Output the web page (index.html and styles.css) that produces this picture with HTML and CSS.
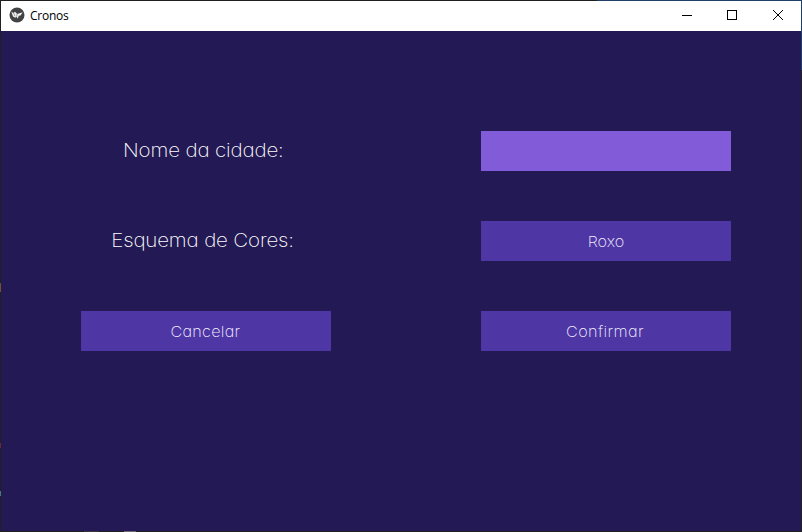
FILE: index.html
```
<!DOCTYPE html>
<html lang="pt-BR">
<head>
<meta charset="utf-8">
<title>Cronos</title>
<link rel="stylesheet" href="styles.css">
</head>
<body>
<div class="window">
  <header class="titlebar">
    <svg class="logo" width="16" height="16" viewBox="0 0 16 16"><circle cx="8" cy="8" r="7.5" fill="#424344"/><path d="M2.300 4.800 4.500 6 6 4.800 8.200 7 13.700 5.300 11.500 8.400 9.800 8.800 8.800 11.400 7.300 9.800 6.300 10.800 4 9.400Z" fill="#f4f4f4"/><path d="M4.700 6 6 9.300M8.200 7 7.500 9.500" stroke="#777" stroke-width=".7"/></svg>
    <span class="title">Cronos</span>
    <div class="controls">
      <svg width="46" height="30" shape-rendering="crispEdges"><path d="M19 14h10v1H19z"/></svg>
      <svg width="46" height="30" shape-rendering="crispEdges"><path d="M18.500 9.500h9v9h-9z" fill="none" stroke="#000"/></svg>
      <svg width="46" height="30"><path d="M18 9l10 10M28 9l-10 10" fill="none" stroke="#000" stroke-width="1"/></svg>
    </div>
  </header>
  <main class="form">
    <label class="label" for="city"><span class="text nome">Nome da cidade:</span></label>
    <input class="field" id="city" type="text">
    <div class="label"><span class="text esquema">Esquema de Cores:</span></div>
    <button class="button"><span class="text roxo">Roxo</span></button>
    <button class="button"><span class="text cancelar">Cancelar</span></button>
    <button class="button"><span class="text confirmar">Confirmar</span></button>
  </main>
</div>
</body>
</html>
```
FILE: styles.css
```
* { box-sizing: border-box; }
body { margin: 0; }
.window {
  width: 802px;
  height: 532px;
  padding: 1px;
  background:
    linear-gradient(#231954, #231954) 1px 1px / 800px 530px no-repeat,
    linear-gradient(#6d6874, #6d6874) 124px 531px / 12px 1px no-repeat,
    linear-gradient(#39343f, #39343f) 84px 531px / 15px 1px no-repeat,
    linear-gradient(#1f3f6b, #1f3f6b) 597px 0 / 205px 1px no-repeat,
    linear-gradient(#1f3f6b, #1f3f6b) 801px 0 / 1px 70px no-repeat,
    linear-gradient(#75502f, #75502f) 0 283px / 1px 9px no-repeat,
    linear-gradient(#6b2a24, #6b2a24) 0 443px / 1px 5px no-repeat,
    linear-gradient(#4c7a73, #4c7a73) 0 491px / 1px 5px no-repeat,
    #201f22;
  overflow: hidden;
}
.titlebar {
  height: 30px;
  display: flex;
  align-items: center;
  padding-left: 8px;
  background: #fff;
}
.logo { margin-top: -2px; }
.title {
  margin-left: 5px;
  font: 12px/16px "Open Sans", sans-serif;
  letter-spacing: -0.25px;
  color: #000;
}
.controls { display: flex; margin-left: auto; }
.controls svg { display: block; }
.form {
  display: grid;
  grid-template-columns: 250px 250px;
  grid-auto-rows: 40px;
  column-gap: 150px;
  row-gap: 50px;
  padding: 100px 70px 0 80px;
  font-family: Inter, sans-serif;
  font-weight: 250;
  font-feature-settings: "cv11" 1;
  color: #fff;
}
.label {
  display: flex;
  align-items: center;
  justify-content: center;
  font-size: 19px;
  white-space: nowrap;
  margin-left: -6px;
  padding-bottom: 2px;
}
.field { width: 250px; border: 0; padding: 0 8px; background: #815bd8; outline: 0; }
.button {
  display: flex;
  align-items: center;
  justify-content: center;
  border: 0;
  padding: 0 1px 0 0;
  background: #4e36a5;
  color: #f4f1ff;
  font: inherit;
  font-size: 15px;
}
.text { transform: scaleX(1.08); }
.nome { letter-spacing: -0.15px; }
.esquema { letter-spacing: -0.15px; }
.roxo { letter-spacing: 0; }
.cancelar { letter-spacing: 0.25px; }
.confirmar { letter-spacing: 0.35px; }
```
